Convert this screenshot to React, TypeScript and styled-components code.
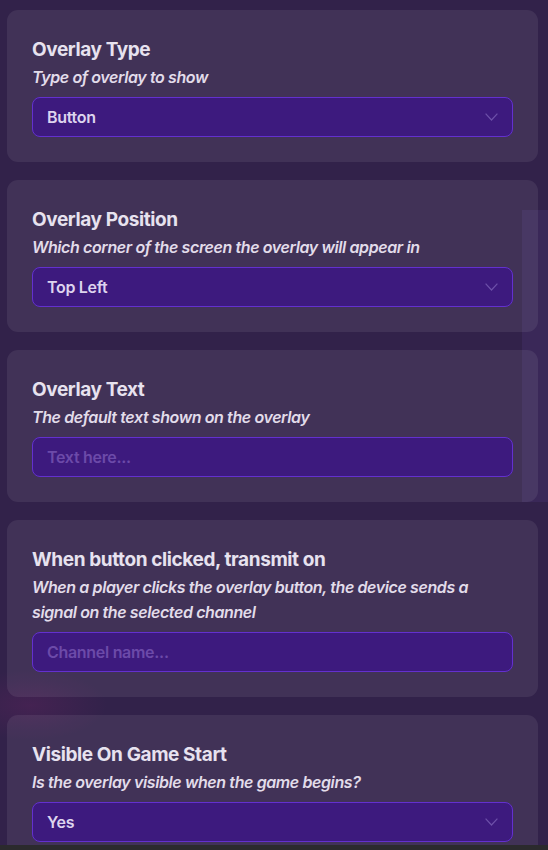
import React from "react";
import styled, { createGlobalStyle } from "styled-components";

const GlobalStyle = createGlobalStyle`
  html, body {
    margin: 0;
    padding: 0;
    background: #2b2a2d;
  }
  body {
    font-family: Inter, "Noto Sans", "Liberation Sans", sans-serif;
    -webkit-font-smoothing: antialiased;
  }
  * { box-sizing: border-box; }
`;

const Page = styled.div`
  height: 845px;
  overflow: hidden;
  padding: 10px 10px 0 7px;
  display: flex;
  flex-direction: column;
  gap: 18px;
  background:
    radial-gradient(ellipse 110px 50px at 30px 705px, rgba(110, 35, 100, 0.3), transparent 70%),
    linear-gradient(90deg, transparent 522px, #3a2858 522px) 0 210px / 100% 292px no-repeat,
    #32224a;
`;

const Card = styled.section`
  flex-shrink: 0;
  background: rgba(255, 255, 255, 0.075);
  border-radius: 11px;
  padding: 28px 25px 25px;
  display: flex;
  flex-direction: column;
`;

const Title = styled.h2`
  margin: 0 0 3px;
  font-size: 19px;
  line-height: 24px;
  font-weight: 700;
  letter-spacing: -0.4px;
  color: #e7e2ef;
`;

const Hint = styled.p`
  margin: 0 12px 7px 0;
  font-size: 16px;
  line-height: 25px;
  font-weight: 600;
  font-style: italic;
  letter-spacing: -0.4px;
  color: #e2dcea;
`;

const SelectBox = styled.div`
  height: 40px;
  border-radius: 8px;
  border: 1.5px solid #6330cf;
  background: #3d1a7e;
  display: flex;
  align-items: center;
  justify-content: space-between;
  padding: 0 14px 0 14px;
  color: #ddd4ee;
  font-size: 16px;
  font-weight: 600;
  letter-spacing: -0.3px;
`;

const TextInput = styled.input`
  height: 40px;
  width: 100%;
  border-radius: 8px;
  border: 1.5px solid #6330cf;
  background: #3d1a7e;
  padding: 0 14px;
  color: #ddd4ee;
  font-family: inherit;
  font-size: 16px;
  font-weight: 600;
  letter-spacing: -0.3px;
  outline: none;
  &::placeholder {
    color: #6c4aa9;
  }
`;

const Chevron = () => (
  <svg width="13" height="8" viewBox="0 0 13 8" fill="none">
    <path d="M0.6 0.6 L6.5 7 L12.4 0.6" stroke="#6d50a9" strokeWidth="1.2" />
  </svg>
);

type Field =
  | { kind: "select"; title: string; hint: string; value: string }
  | { kind: "input"; title: string; hint: string; placeholder: string };

const fields: Field[] = [
  { kind: "select", title: "Overlay Type", hint: "Type of overlay to show", value: "Button" },
  {
    kind: "select",
    title: "Overlay Position",
    hint: "Which corner of the screen the overlay will appear in",
    value: "Top Left",
  },
  { kind: "input", title: "Overlay Text", hint: "The default text shown on the overlay", placeholder: "Text here..." },
  {
    kind: "input",
    title: "When button clicked, transmit on",
    hint: "When a player clicks the overlay button, the device sends a signal on the selected channel",
    placeholder: "Channel name...",
  },
  {
    kind: "select",
    title: "Visible On Game Start",
    hint: "Is the overlay visible when the game begins?",
    value: "Yes",
  },
];

export default function App() {
  return (
    <>
      <GlobalStyle />
      <Page>
        {fields.map((f) => (
          <Card key={f.title}>
            <Title>{f.title}</Title>
            <Hint>{f.hint}</Hint>
            {f.kind === "select" ? (
              <SelectBox>
                <span>{f.value}</span>
                <Chevron />
              </SelectBox>
            ) : (
              <TextInput placeholder={f.placeholder} />
            )}
          </Card>
        ))}
      </Page>
    </>
  );
}
